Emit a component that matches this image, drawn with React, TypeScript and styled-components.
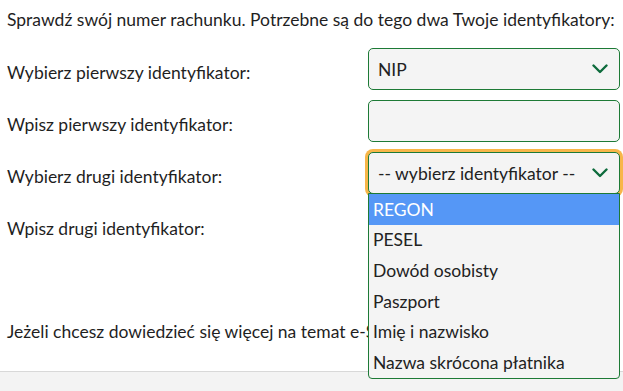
import React from "react";
import styled, { createGlobalStyle } from "styled-components";

const Global = createGlobalStyle`
  html, body { margin: 0; padding: 0; background: #ffffff; }
  body { font-family: Lato, "Noto Sans", sans-serif; color: #1f1f1f; overflow: hidden; }
  * { box-sizing: border-box; }
`;

const Page = styled.div`
  width: 623px;
  height: 391px;
  display: flex;
  flex-direction: column;
  overflow: hidden;
`;

const Content = styled.div`
  flex: 1;
  padding: 9px 0 0 7px;
  display: flex;
  flex-direction: column;
  min-width: 0;
`;

const Intro = styled.p`
  margin: 0;
  font-size: 17.5px;
  line-height: 22px;
  white-space: nowrap;
`;

const Form = styled.div`
  margin-top: 17px;
  display: flex;
  flex-direction: column;
  gap: 10px;
`;

const Row = styled.div`
  display: grid;
  grid-template-columns: 361px 252px;
  align-items: start;
`;

const Label = styled.label`
  font-size: 17.5px;
  line-height: 22px;
  padding-top: 13.5px;
`;

const FieldWrap = styled.div`
  position: relative;
`;

const Box = styled.div<{ $focused?: boolean }>`
  height: 42px;
  border: 1px solid #1d7a36;
  border-radius: 5px;
  background: #f4f4f4;
  display: flex;
  align-items: center;
  justify-content: space-between;
  padding: 0 11px 0 9px;
  font-size: 17.5px;
  color: #222;
  box-shadow: ${(p) => (p.$focused ? "0 0 0 3px #f8b649" : "none")};
`;

const Chevron = () => (
  <svg width="16" height="10" viewBox="0 0 16 10">
    <polyline
      points="1.5,1.5 8,8 14.5,1.5"
      fill="none"
      stroke="#0d6b3c"
      strokeWidth="2.4"
      strokeLinecap="round"
      strokeLinejoin="round"
    />
  </svg>
);

const List = styled.ul`
  position: absolute;
  top: 41px;
  left: 0;
  width: 252px;
  margin: 0;
  padding: 0;
  list-style: none;
  background: #f4f4f4;
  border: 1px solid #1d7a36;
  border-radius: 0 0 4px 4px;
  z-index: 5;
`;

const Option = styled.li<{ $active?: boolean }>`
  height: 30.6px;
  display: flex;
  align-items: center;
  padding-left: 4px;
  font-size: 17.5px;
  color: ${(p) => (p.$active ? "#ffffff" : "#222")};
  background: ${(p) => (p.$active ? "#5597f6" : "transparent")};
`;

const Footer = styled.p`
  margin: 0;
  margin-top: 75px;
  font-size: 17.5px;
  line-height: 22px;
  white-space: nowrap;
`;

const Band = styled.div`
  height: 20px;
  flex-shrink: 0;
  border-top: 1px solid #d8d8d8;
  background: #f3f3f3;
`;

const options = [
  "REGON",
  "PESEL",
  "Dowód osobisty",
  "Paszport",
  "Imię i nazwisko",
  "Nazwa skrócona płatnika",
];

export default function App() {
  return (
    <Page>
      <Global />
      <Content>
        <Intro>Sprawdź swój numer rachunku. Potrzebne są do tego dwa Twoje identyfikatory:</Intro>
        <Form>
          <Row>
            <Label>Wybierz pierwszy identyfikator:</Label>
            <FieldWrap>
              <Box>
                <span>NIP</span>
                <Chevron />
              </Box>
            </FieldWrap>
          </Row>
          <Row>
            <Label>Wpisz pierwszy identyfikator:</Label>
            <FieldWrap>
              <Box />
            </FieldWrap>
          </Row>
          <Row>
            <Label>Wybierz drugi identyfikator:</Label>
            <FieldWrap>
              <Box $focused>
                <span>-- wybierz identyfikator --</span>
                <Chevron />
              </Box>
              <List>
                {options.map((o, i) => (
                  <Option key={o} $active={i === 0}>
                    {o}
                  </Option>
                ))}
              </List>
            </FieldWrap>
          </Row>
          <Row>
            <Label>Wpisz drugi identyfikator:</Label>
            <FieldWrap>
              <Box />
            </FieldWrap>
          </Row>
        </Form>
        <Footer>Jeżeli chcesz dowiedzieć się więcej na temat e-Składki, kliknij tutaj.</Footer>
      </Content>
      <Band />
    </Page>
  );
}
